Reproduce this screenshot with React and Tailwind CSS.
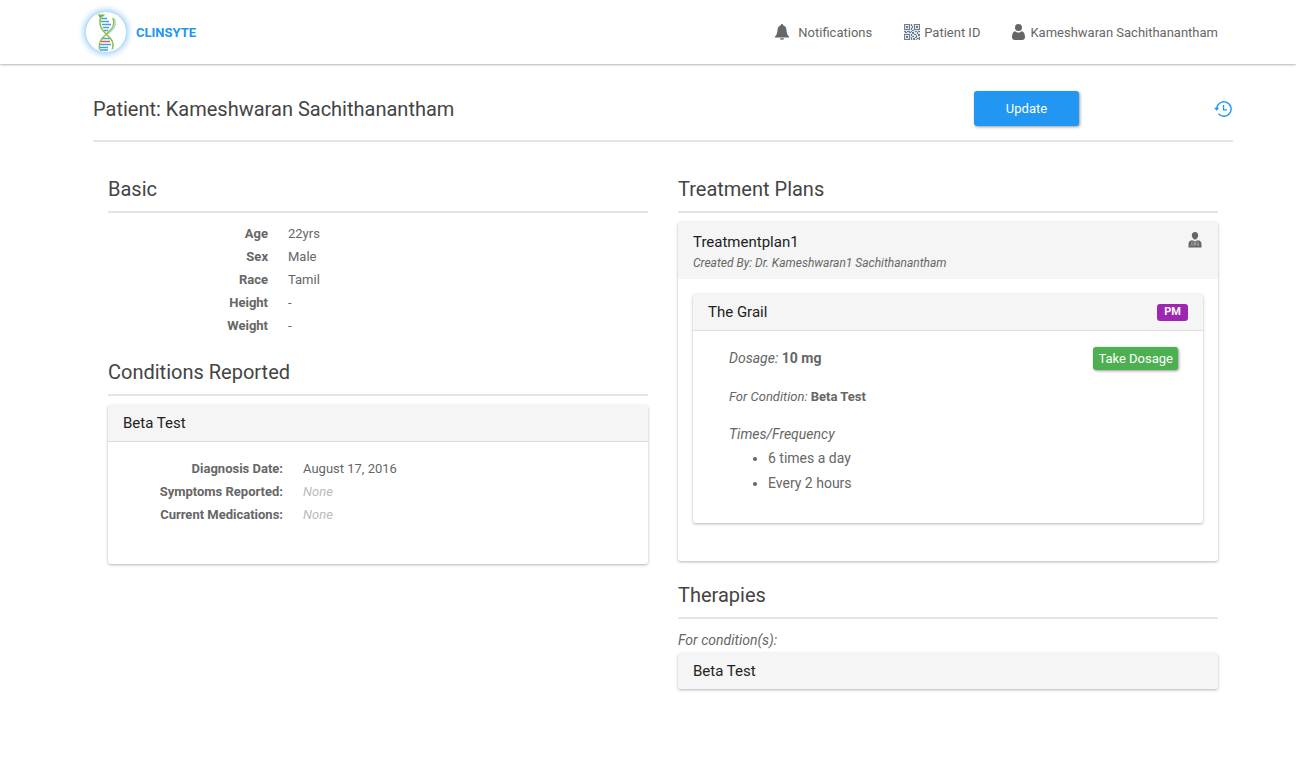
import React from "react";

const card =
  "rounded-[3px] bg-white shadow-[0_1px_3px_rgba(0,0,0,0.3)]";
const cardHead = "flex items-center justify-between rounded-t-[3px] bg-[#f5f5f5] px-[15px]";

function Logo() {
  return (
    <svg viewBox="0 0 40 40" className="size-10 rounded-full bg-white shadow-[0_0_6px_2px_#90caf9]" aria-hidden="true">
      <g strokeWidth="1.3" stroke="#4a9fd8">
        <path d="M15 6.500h6M15 9.500h8M16 12.500h9M17 15.500h6M18 18.500h4M16 26.500h8M14 32.500h11M13 35.500h9M14 38h8" />
        <path d="M15 29.500h9" stroke="#e2574c" strokeWidth="1.500" />
      </g>
      <g fill="none" strokeLinecap="round">
        <path d="M28.500 7c3 8-3 12-7 15" stroke="#a9cfe8" strokeWidth="1.200" />
        <path d="M21 23c5 4 8 8 5 14" stroke="#a9cfe8" strokeWidth="1" />
        <path d="M27 6.500c3 8-3 12-7 16-5 4-8 8-6.500 14.500" stroke="#8bc34a" strokeWidth="1.500" />
        <path d="M14.500 5.500c-2 8 1 12 6 17 5 4 8 8 6 14" stroke="#8bc34a" strokeWidth="1.500" />
      </g>
      <path d="M12 1.500c2 1.500 4 1 7 1-.5 2-4 3.500-6 2.500z" fill="#7cb342" />
    </svg>
  );
}

function BellIcon() {
  return (
    <svg viewBox="0 0 16 16" className="size-4" fill="currentColor" aria-hidden="true">
      <path d="M8 0a1.200 1.200 0 0 1 1.200 1.200C11.300 1.800 12.300 3.500 12.500 6c.3 4 1 5.300 2.700 6.700V13.500H.8v-.8C2.500 11.300 3.200 10 3.500 6c.2-2.500 1.200-4.200 3.300-4.800A1.200 1.200 0 0 1 8 0zM6 14.200h4a2 1.500 0 0 1-4 0z" />
    </svg>
  );
}

function QrIcon() {
  return (
    <svg viewBox="0 0 16 16" className="size-4" fill="#6f7c92" aria-hidden="true">
      <path d="M0 0h16v16H0z" fill="#dfe3ea" />
      <path fillRule="evenodd" d="M0 0h6v6H0zM1 1v4h4V1zM2 2h2v2H2zM10 0h6v6h-6zM11 1v4h4V1zM12 2h2v2h-2zM0 10h6v6H0zM1 11v4h4v-4zM2 12h2v2H2z" />
      <path d="M7 0h1v2H7zM8 2h1v2H8zM7 4h1v2H7zM8 6h2v1H8zM0 7h2v1H0zM3 7h3v1H3zM1 8h2v1H1zM5 8h2v1H5zM7 7h1v1H7zM8 8h2v2H8zM11 7h2v1h-2zM14 7h2v1h-2zM13 8h1v2h-1zM10 10h2v1h-2zM7 10h1v2H7zM8 12h2v1H8zM7 13h1v3H7zM9 14h2v2H9zM12 11h1v2h-1zM14 10h2v2h-2zM11 13h2v1h-2zM13 14h2v1h-2zM15 13h1v3h-1zM12 15h1v1h-1z" />
    </svg>
  );
}

function UserIcon() {
  return (
    <svg viewBox="0 0 13 16" className="h-4 w-[13px]" fill="currentColor" aria-hidden="true">
      <circle cx="6.500" cy="3.500" r="3.500" />
      <path d="M3.200 7.200a5 5 0 0 0 6.600 0C12 7.500 13 10 13 13c0 2-1 3-3 3H3c-2 0-3-1-3-3 0-3 1-5.500 3.200-5.800z" />
    </svg>
  );
}

function DoctorIcon() {
  return (
    <svg viewBox="0 0 14 16" className="h-4 w-3.5" fill="#666" aria-hidden="true">
      <path d="M7 0c2 0 3.200 1.300 3.200 3.200S8.800 7.500 7 7.500 3.800 5 3.800 3.200 5 0 7 0zM4 8.300l3 1 3-1c2.500.4 3.500 1.700 3.500 4V15.500H.5v-3.200c0-2.300 1-3.600 3.500-4z" />
      <path d="M4 9.500v2M2.800 14v-1.300l1.200-1.200 1.200 1.200V14M10 9.500v2.500M6 9.500l1 4 1-4" stroke="#bdbdbd" strokeWidth=".7" fill="none" />
      <circle cx="10" cy="12.800" r=".8" fill="none" stroke="#bdbdbd" strokeWidth=".6" />
    </svg>
  );
}

function HistoryIcon() {
  return (
    <svg viewBox="0 0 18 16" className="h-4 w-[18px]" fill="none" stroke="#2196f3" strokeWidth="1.400" aria-hidden="true">
      <path d="M2.700 8A7.200 7.200 0 1 1 4.500 12.800" />
      <path d="M9.500 4v4.800H13" strokeWidth="1.300" />
      <path d="M0 6.800h5.300L2.700 9.800z" fill="#2196f3" stroke="none" />
    </svg>
  );
}

function Heading({ children }) {
  return (
    <h2 className="mb-[9px] border-b-2 border-[#e5e5e5] pb-[9px] text-[20px] leading-[26px] text-[#444]">
      {children}
    </h2>
  );
}

function Details({ rows }) {
  return (
    <dl>
      {rows.map(([label, value]) => (
        <div key={label} className="flex gap-5">
          <dt className="w-40 text-right font-bold">{label}</dt>
          <dd>{value}</dd>
        </div>
      ))}
    </dl>
  );
}

const none = <em className="text-[#bbb]">None</em>;

export default function App() {
  return (
    <div className="bg-white font-[Roboto,sans-serif] text-[13px] leading-[23px] text-[#666]">
      <header className="flex h-16 items-center justify-between pl-[86px] pr-[78px] shadow-[0_1px_2px_rgba(0,0,0,0.3)]">
        <a href="#home" className="flex items-center gap-2.5 font-bold text-[#2196f3]">
          <Logo />
          CLINSYTE
        </a>
        <nav className="flex items-center gap-8">
          <a href="#notifications" className="flex items-center gap-2"><BellIcon />Notifications</a>
          <a href="#patient-id" className="flex items-center gap-1"><QrIcon />Patient ID</a>
          <a href="#profile" className="flex items-center gap-[5px]"><UserIcon />Kameshwaran Sachithanantham</a>
        </nav>
      </header>

      <main className="pb-12 pl-[93px] pr-[63px] pt-[27px]">
        <div className="flex items-center justify-between border-b-2 border-[#e5e5e5] pb-3.5">
          <h1 className="flex-1 text-[20px] leading-[26px] text-[#444]">Patient: Kameshwaran Sachithanantham</h1>
          <div className="flex w-[259px] items-center justify-between pr-px">
            <button className="h-[35px] w-[105px] rounded-[3px] bg-[#2196f3] text-white shadow-[1px_1px_3px_rgba(0,0,0,0.4)]">Update</button>
            <button aria-label="History"><HistoryIcon /></button>
          </div>
        </div>

        <div className="grid grid-cols-2 gap-[30px] px-[15px] pt-[34px]">
          <div>
            <section>
              <Heading>Basic</Heading>
              <Details
                rows={[["Age", "22yrs"], ["Sex", "Male"], ["Race", "Tamil"], ["Height", "-"], ["Weight", "-"]]}
              />
            </section>
            <section className="mt-[22px]">
              <Heading>Conditions Reported</Heading>
              <article className={card}>
                <div className={`${cardHead} h-[37px] border-b border-[#ddd]`}>
                  <h3 className="text-[15px] text-[#212121]">Beta Test</h3>
                </div>
                <div className="px-[15px] pb-[38px] pt-[15px]">
                  <Details
                    rows={[["Diagnosis Date:", "August 17, 2016"], ["Symptoms Reported:", none], ["Current Medications:", none]]}
                  />
                </div>
              </article>
            </section>
          </div>

          <div>
            <section>
              <Heading>Treatment Plans</Heading>
              <article className={card}>
                <div className={`${cardHead} h-[57px] items-start pt-2.5`}>
                  <div>
                    <h3 className="text-[15px] leading-[21px] text-[#212121]">Treatmentplan1</h3>
                    <p className="text-[12px] italic leading-5">Created By: Dr. Kameshwaran1 Sachithanantham</p>
                  </div>
                  <div className="pr-px"><DoctorIcon /></div>
                </div>
                <div className="px-[15px] pb-[38px] pt-[15px]">
                  <div className={card}>
                    <div className={`${cardHead} h-[37px] border-b border-[#ddd]`}>
                      <h4 className="text-[15px] text-[#212121]">The Grail</h4>
                      <span className="h-[17px] rounded-[3px] bg-[#9c27b0] px-[7px] text-[11px] font-bold leading-4 text-white">PM</span>
                    </div>
                    <div className="pb-[27px] pl-9 pr-[25px] pt-[15px] text-[14px]">
                      <div className="flex items-center justify-between">
                        <p className="leading-6"><em>Dosage:</em> <strong>10 mg</strong></p>
                        <button className="h-[23px] rounded-[3px] bg-[#4caf50] px-[5px] text-[13px] text-white shadow-[1px_1px_3px_rgba(0,0,0,0.4)]">Take Dosage</button>
                      </div>
                      <p className="mt-[15px] text-[13px]"><em>For Condition:</em> <strong>Beta Test</strong></p>
                      <p className="mt-3.5 italic leading-6">Times/Frequency</p>
                      <ul className="list-disc pl-[39px] leading-[25px]">
                        <li>6 times a day</li>
                        <li>Every 2 hours</li>
                      </ul>
                    </div>
                  </div>
                </div>
              </article>
            </section>
            <section className="mt-[21px]">
              <Heading>Therapies</Heading>
              <p className="text-[14px] italic leading-[25px]">For condition(s):</p>
              <article className={card}>
                <div className={`${cardHead} h-9 rounded-b-[3px]`}>
                  <h3 className="text-[15px] text-[#212121]">Beta Test</h3>
                </div>
              </article>
            </section>
          </div>
        </div>
      </main>
    </div>
  );
}
